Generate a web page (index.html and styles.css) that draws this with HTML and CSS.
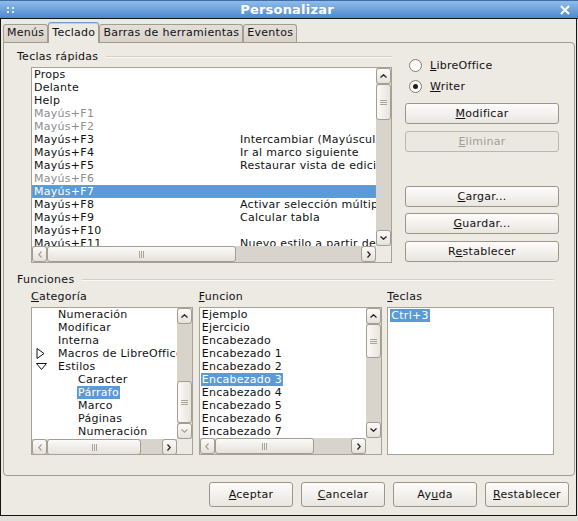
FILE: index.html
```html
<!DOCTYPE html>
<html lang="es">
<head>
    <meta charset="UTF-8">
    <title>Personalizar</title>
    <link rel="stylesheet" href="styles.css">
</head>
<body>
    <div class="titlebar">
        <svg class="grip" width="7" height="6" viewBox="0 0 7 6">
            <rect x="0" y="0" width="2" height="2" fill="#e6f0fb"/>
            <rect x="5" y="0" width="2" height="2" fill="#e6f0fb"/>
            <rect x="0" y="4" width="2" height="2" fill="#e6f0fb"/>
            <rect x="5" y="4" width="2" height="2" fill="#e6f0fb"/>
        </svg>
        <span class="title">Personalizar</span>
        <svg class="close" width="10" height="10" viewBox="0 0 10 10">
            <path d="M1 1 L9 9 M9 1 L1 9" stroke="#fff" stroke-width="2"/>
        </svg>
    </div>

    <div class="frame">
        <div class="tabs">
            <div class="tab">Menús</div>
            <div class="tab active">Teclado</div>
            <div class="tab">Barras de herramientas</div>
            <div class="tab">Eventos</div>
        </div>

        <div class="panel">
            <div class="top">
                <div class="left">
                    <div class="legend"><span>Teclas rápidas</span><i></i></div>
                    <div class="list keys">
                        <div class="content">
                            <div class="row"><span class="k">Props</span></div>
                            <div class="row"><span class="k">Delante</span></div>
                            <div class="row"><span class="k">Help</span></div>
                            <div class="row off"><span class="k">Mayús+F1</span></div>
                            <div class="row off"><span class="k">Mayús+F2</span></div>
                            <div class="row"><span class="k">Mayús+F3</span><span>Intercambiar (Mayúsculas/minúsculas)</span></div>
                            <div class="row"><span class="k">Mayús+F4</span><span>Ir al marco siguiente</span></div>
                            <div class="row"><span class="k">Mayús+F5</span><span>Restaurar vista de edición</span></div>
                            <div class="row off"><span class="k">Mayús+F6</span></div>
                            <div class="row sel"><span class="k">Mayús+F7</span></div>
                            <div class="row"><span class="k">Mayús+F8</span><span>Activar selección múltiple</span></div>
                            <div class="row"><span class="k">Mayús+F9</span><span>Calcular tabla</span></div>
                            <div class="row"><span class="k">Mayús+F10</span></div>
                            <div class="row"><span class="k">Mayús+F11</span><span>Nuevo estilo a partir de selección</span></div>
                        </div>
                        <div class="vbar">
                            <div class="sbtn"><svg width="7" height="4"><path d="M0.5 3.5 L3.5 0.8 L6.5 3.5" fill="none" stroke="#222" stroke-width="1.3"/></svg></div>
                            <div class="trough">
                                <div class="thumb" style="margin-top:0;height:36px"><svg width="7" height="7"><path d="M0 1.5H7M0 3.5H7M0 5.5H7" stroke="#aaa498"/></svg></div>
                            </div>
                            <div class="sbtn"><svg width="7" height="4"><path d="M0.5 0.5 L3.5 3.2 L6.5 0.5" fill="none" stroke="#222" stroke-width="1.3"/></svg></div>
                        </div>
                        <div class="hbar">
                            <div class="sbtn dim"><svg width="4" height="7"><path d="M3.5 0.5 L0.8 3.5 L3.5 6.5" fill="none" stroke="#aaa498" stroke-width="1.3"/></svg></div>
                            <div class="trough">
                                <div class="thumb" style="width:189px"><svg width="7" height="7"><path d="M1.5 0V7M3.5 0V7M5.5 0V7" stroke="#aaa498"/></svg></div>
                            </div>
                            <div class="sbtn"><svg width="4" height="7"><path d="M0.5 0.5 L3.2 3.5 L0.5 6.5" fill="none" stroke="#222" stroke-width="1.3"/></svg></div>
                        </div>
                        <div class="corner"></div>
                    </div>
                </div>

                <div class="side">
                    <label class="radio"><span class="dot"></span><span><u>L</u>ibreOffice</span></label>
                    <label class="radio"><span class="dot on"></span><span><u>W</u>riter</span></label>
                    <button class="btn first"><u>M</u>odificar</button>
                    <button class="btn gap7" disabled><u>E</u>liminar</button>
                    <button class="btn load"><u>C</u>argar...</button>
                    <button class="btn gap6"><u>G</u>uardar...</button>
                    <button class="btn gap7">R<u>e</u>stablecer</button>
                </div>
            </div>

            <div class="bottom">
                <div class="legend"><span>Funciones</span><i></i></div>
                <div class="cols">
                    <div class="col cat">
                        <div class="cap"><u>C</u>ategoría</div>
                        <div class="list">
                            <div class="content">
                                <div class="row l0">Numeración</div>
                                <div class="row l0">Modificar</div>
                                <div class="row l0">Interna</div>
                                <div class="row l0"><svg class="exp" width="9" height="11"><path d="M1 0.5 L8 5.5 L1 10.5 Z" fill="none" stroke="#111"/></svg>Macros de LibreOffice</div>
                                <div class="row l0"><svg class="exp" width="11" height="7"><path d="M0.5 0.5 L10.5 0.5 L5.5 6.5 Z" fill="none" stroke="#111"/></svg>Estilos</div>
                                <div class="row l1">Caracter</div>
                                <div class="row l1"><span class="hl">Párrafo</span></div>
                                <div class="row l1">Marco</div>
                                <div class="row l1">Páginas</div>
                                <div class="row l1">Numeración</div>
                            </div>
                            <div class="vbar">
                                <div class="sbtn"><svg width="7" height="4"><path d="M0.5 3.5 L3.5 0.8 L6.5 3.5" fill="none" stroke="#222" stroke-width="1.3"/></svg></div>
                                <div class="trough">
                                    <div class="thumb" style="margin-top:57px;height:42px"><svg width="7" height="7"><path d="M0 1.5H7M0 3.5H7M0 5.5H7" stroke="#aaa498"/></svg></div>
                                </div>
                                <div class="sbtn dim"><svg width="7" height="4"><path d="M0.5 0.5 L3.5 3.2 L6.5 0.5" fill="none" stroke="#aaa498" stroke-width="1.3"/></svg></div>
                            </div>
                            <div class="hbar">
                                <div class="sbtn dim"><svg width="4" height="7"><path d="M3.5 0.5 L0.8 3.5 L3.5 6.5" fill="none" stroke="#aaa498" stroke-width="1.3"/></svg></div>
                                <div class="trough">
                                    <div class="thumb" style="width:94px"><svg width="7" height="7"><path d="M1.5 0V7M3.5 0V7M5.5 0V7" stroke="#aaa498"/></svg></div>
                                </div>
                                <div class="sbtn"><svg width="4" height="7"><path d="M0.5 0.5 L3.2 3.5 L0.5 6.5" fill="none" stroke="#222" stroke-width="1.3"/></svg></div>
                            </div>
                            <div class="corner"></div>
                        </div>
                    </div>

                    <div class="col func">
                        <div class="cap"><u>F</u>uncion</div>
                        <div class="list">
                            <div class="content">
                                <div class="row">Ejemplo</div>
                                <div class="row">Ejercicio</div>
                                <div class="row">Encabezado</div>
                                <div class="row">Encabezado 1</div>
                                <div class="row">Encabezado 2</div>
                                <div class="row"><span class="hl">Encabezado 3</span></div>
                                <div class="row">Encabezado 4</div>
                                <div class="row">Encabezado 5</div>
                                <div class="row">Encabezado 6</div>
                                <div class="row">Encabezado 7</div>
                            </div>
                            <div class="vbar">
                                <div class="sbtn"><svg width="7" height="4"><path d="M0.5 3.5 L3.5 0.8 L6.5 3.5" fill="none" stroke="#222" stroke-width="1.3"/></svg></div>
                                <div class="trough">
                                    <div class="thumb" style="margin-top:0;height:34px"><svg width="7" height="7"><path d="M0 1.5H7M0 3.5H7M0 5.5H7" stroke="#aaa498"/></svg></div>
                                </div>
                                <div class="sbtn"><svg width="7" height="4"><path d="M0.5 0.5 L3.5 3.2 L6.5 0.5" fill="none" stroke="#222" stroke-width="1.3"/></svg></div>
                            </div>
                            <div class="hbar">
                                <div class="sbtn dim"><svg width="4" height="7"><path d="M3.5 0.5 L0.8 3.5 L3.5 6.5" fill="none" stroke="#aaa498" stroke-width="1.3"/></svg></div>
                                <div class="trough">
                                    <div class="thumb" style="width:99px"><svg width="7" height="7"><path d="M1.5 0V7M3.5 0V7M5.5 0V7" stroke="#aaa498"/></svg></div>
                                </div>
                                <div class="sbtn"><svg width="4" height="7"><path d="M0.5 0.5 L3.2 3.5 L0.5 6.5" fill="none" stroke="#222" stroke-width="1.3"/></svg></div>
                            </div>
                            <div class="corner"></div>
                        </div>
                    </div>

                    <div class="col keys-col">
                        <div class="cap"><u>T</u>eclas</div>
                        <div class="list plain">
                            <div class="content">
                                <div class="row"><span class="hl">Ctrl+3</span></div>
                            </div>
                        </div>
                    </div>
                </div>
            </div>
        </div>

        <div class="footer">
            <button class="btn big"><u>A</u>ceptar</button>
            <button class="btn big"><u>C</u>ancelar</button>
            <button class="btn big">Ay<u>u</u>da</button>
            <button class="btn big"><u>R</u>establecer</button>
        </div>
    </div>
</body>
</html>
```

FILE: styles.css
```css
body {
    margin: 0;
    width: 578px;
    height: 521px;
    overflow: hidden;
    background: #e2dfd9;
    font-family: 'DejaVu Sans', sans-serif;
    font-size: 11px;
    letter-spacing: 0.27px;
    color: #111;
}
u { text-decoration: underline; text-underline-offset: 1px; }

.titlebar {
    height: 19px;
    box-sizing: border-box;
    border-top: 1px solid #3f6fa6;
    border-bottom: 1px solid #141414;
    background: linear-gradient(#8fbcea, #4d89ce);
    display: flex;
    align-items: center;
}
.grip { margin-left: 7px; }
.title {
    flex: 1;
    text-align: center;
    color: #fff;
    font-weight: bold;
    font-size: 13px;
    letter-spacing: 0.2px;
    margin-left: -4px;
    margin-right: -4px;
}
.close { margin-right: 8px; }

.frame {
    width: 577px;
    height: 497px;
    box-sizing: border-box;
    border: 1px solid #151515;
    border-top: none;
    background: #edeae4;
}

.tabs {
    display: flex;
    align-items: flex-end;
    padding: 3px 0 0 2px;
    height: 20px;
}
.tab {
    height: 18px;
    box-sizing: border-box;
    padding: 0 3px;
    border: 1px solid #a39d90;
    border-bottom: none;
    border-radius: 3px 3px 0 0;
    background: linear-gradient(#e4e0d9, #d8d3ca);
    line-height: 16px;
}
.tab.active {
    height: 21px;
    margin-bottom: -1px;
    border-top: 1px solid #6f9fd6;
    box-shadow: inset 0 1px #b5cfee;
    background: #edeae4;
    line-height: 19px;
    position: relative;
}

.panel {
    margin-left: 2px;
    width: 572px;
    height: 434px;
    box-sizing: border-box;
    border: 1px solid #a39d90;
    border-radius: 0 4px 4px 4px;
    padding: 7px 0 0 13px;
}
.top { display: flex; }
.left { width: 375px; }

.legend {
    display: flex;
    align-items: center;
    height: 13px;
    line-height: 13px;
}
.legend i {
    flex: 1;
    margin-left: 8px;
    border-top: 1px solid #d4cfc5;
    border-bottom: 1px solid #faf9f7;
}

.list {
    box-sizing: border-box;
    border: 1px solid #a8a294;
    background: #fff;
    display: grid;
    grid-template-columns: 1fr 15px;
    grid-template-rows: 1fr 16px;
    overflow: hidden;
}
.list.plain { display: block; }
.keys {
    margin: 4px 0 0 14px;
    width: 361px;
    height: 196px;
}
.content { overflow: hidden; }
.row {
    height: 13px;
    line-height: 13px;
    white-space: nowrap;
    display: flex;
    align-items: center;
}
.keys .row { padding-left: 2px; }
.keys .k { width: 206px; flex: none; }
.row.off { color: #8d8d8d; }
.row.sel {
    background: #5a9ad6;
    color: #fff;
    box-sizing: border-box;
    border: 1px dotted #d98a34;
    padding-left: 1px;
}
.hl { background: #5a9ad6; color: #fff; padding: 0 1px; margin-left: -1px; }

.vbar, .hbar { display: flex; background: #d9d4cb; }
.vbar { flex-direction: column; }
.sbtn {
    flex: none;
    width: 15px;
    height: 16px;
    box-sizing: border-box;
    border: 1px solid #a49e90;
    border-radius: 3px;
    background: linear-gradient(#fcfbf9, #e5e1da);
    display: flex;
    align-items: center;
    justify-content: center;
}
.trough { flex: 1; display: flex; flex-direction: column; }
.hbar .trough { flex-direction: row; }
.thumb {
    box-sizing: border-box;
    border: 1px solid #a49e90;
    border-radius: 3px;
    background: linear-gradient(90deg, #fbfaf8, #e8e4de);
    display: flex;
    align-items: center;
    justify-content: center;
}
.hbar .thumb { height: 16px; background: linear-gradient(#fbfaf8, #e6e2db); }
.corner { background: #edeae4; }

.side { margin-left: 13px; width: 154px; padding-top: 5px; }
.radio {
    display: flex;
    align-items: center;
    height: 21px;
    padding-left: 4px;
}
.dot {
    width: 13px;
    height: 13px;
    box-sizing: border-box;
    border: 1px solid #868074;
    border-radius: 50%;
    background: linear-gradient(#f4f3f0, #fff);
    margin-right: 8px;
    display: flex;
    align-items: center;
    justify-content: center;
}
.dot.on::after {
    content: "";
    width: 5px;
    height: 5px;
    border-radius: 50%;
    background: #1e1e1e;
}

.btn {
    display: block;
    width: 154px;
    height: 21px;
    padding: 0;
    box-sizing: border-box;
    border: 1px solid #9c9688;
    border-radius: 3px;
    background: linear-gradient(#fdfcfb, #e9e6e0);
    font-family: 'DejaVu Sans', sans-serif;
    font-size: 11px;
    letter-spacing: inherit;
    color: #111;
}
.btn:disabled {
    background: #ebe8e2;
    border-color: #bcb7ab;
    color: #a29e94;
}
.first { margin-top: 6px; }
.gap7 { margin-top: 7px; }
.gap6 { margin-top: 6px; }
.load { margin-top: 34px; }

.bottom { width: 537px; margin-top: 10px; }
.cols { display: flex; margin: 4px 0 0 14px; }
.cap { height: 13px; line-height: 13px; }
.col .list { margin-top: 4px; height: 148px; }
.cat { width: 162px; }
.func { width: 184px; margin-left: 6px; }
.keys-col { width: 167px; margin-left: 5px; }
.cat .row { position: relative; }
.cat .l0 { padding-left: 26px; }
.cat .l1 { padding-left: 46px; }
.exp { position: absolute; left: 4px; }
.func .row { padding-left: 2px; }
.plain .content { padding: 1px 0 0 3px; }

.footer {
    display: flex;
    justify-content: flex-end;
    gap: 8px;
    padding-right: 7px;
    margin-top: 6px;
}
.btn.big { width: 84px; height: 25px; }
```
